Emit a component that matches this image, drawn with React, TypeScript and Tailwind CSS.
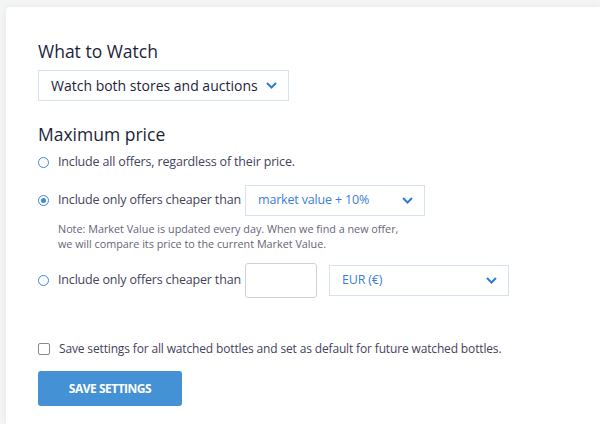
import React, { useState } from 'react';

function Chevron() {
  return (
    <svg width="11" height="7" viewBox="0 0 11 7" fill="none" className="shrink-0">
      <path d="M1 1l4.5 4.5L10 1" stroke="#2d7dd2" strokeWidth="2" />
    </svg>
  );
}

function Radio({ checked }: { checked?: boolean }) {
  return (
    <span className="w-[11px] h-[11px] rounded-full border border-[#3d8ad6] flex items-center justify-center shrink-0 bg-white">
      {checked && <span className="w-[5px] h-[5px] rounded-full bg-[#3d8ad6]" />}
    </span>
  );
}

function Select({ label, className, textClass }: { label: string; className: string; textClass: string }) {
  return (
    <div className={`flex items-center justify-between border border-[#d5e3f0] bg-white ${className}`}>
      <span className={`whitespace-nowrap ${textClass}`}>{label}</span>
      <Chevron />
    </div>
  );
}

export default function App() {
  const [saveAll, setSaveAll] = useState(false);

  return (
    <div className="h-screen bg-[#f3f4f4] pt-[7px] pl-[6px] overflow-hidden" style={{ fontFamily: '"Open Sans", sans-serif' }}>
      <div className="h-full bg-white rounded-tl-[4px] shadow-[0_0_6px_rgba(0,0,0,0.06)] pl-8 pt-[32px]">
        <h2 className="text-[17.5px] leading-6 text-[#1d1f3b]">What to Watch</h2>
        <Select
          label="Watch both stores and auctions"
          className="mt-[7px] w-[251px] h-[31px] pl-3 pr-[11px]"
          textClass="text-[14px] text-[#1d1f3b]"
        />

        <h2 className="mt-[21px] text-[17.5px] leading-6 text-[#1d1f3b]">Maximum price</h2>

        <label className="mt-[6px] flex items-center h-5 gap-[9px] text-[12.5px] tracking-[-0.17px] text-[#44435c]">
          <Radio />
          <span className="whitespace-nowrap">Include all offers, regardless of their price.</span>
        </label>

        <div className="mt-[13px] flex items-center gap-[9px] text-[12.5px] tracking-[-0.17px] text-[#44435c]">
          <Radio checked />
          <span className="w-[178px] whitespace-nowrap">Include only offers cheaper than</span>
          <Select
            label="market value + 10%"
            className="w-[180px] h-[31px] pl-3 pr-[11px]"
            textClass="text-[12.5px] text-[#3a7fd5]"
          />
        </div>
        <p className="mt-[5px] ml-5 text-[10.8px] leading-[15px] text-[#66657a] whitespace-nowrap">
          Note: Market Value is updated every day. When we find a new offer,
          <br />
          we will compare its price to the current Market Value.
        </p>

        <div className="mt-[12px] flex items-center gap-[9px] text-[12.5px] tracking-[-0.17px] text-[#44435c]">
          <Radio />
          <span className="w-[178px] whitespace-nowrap">Include only offers cheaper than</span>
          <div className="flex items-center gap-3">
            <input className="w-[72px] h-[35px] border border-[#c8d3de] rounded-[3px] outline-none" />
            <Select
              label="EUR (€)"
              className="w-[180px] h-[31px] pl-3 pr-[11px]"
              textClass="text-[12.5px] text-[#3a7fd5]"
            />
          </div>
        </div>

        <label className="mt-[41px] flex items-center h-5 gap-[9px] text-[12px] tracking-[-0.15px] text-[#44435c] cursor-pointer">
          <span
            onClick={() => setSaveAll(!saveAll)}
            className="w-[12px] h-[12px] rounded-[2px] border border-[#8a8a96] bg-white shrink-0"
          />
          <span className="whitespace-nowrap">Save settings for all watched bottles and set as default for future watched bottles.</span>
        </label>

        <button className="mt-[12px] w-[144px] h-[35px] rounded-[3px] bg-[#4591d6] text-white text-[12px] font-bold tracking-[-0.5px] uppercase">
          Save Settings
        </button>
      </div>
    </div>
  );
}
